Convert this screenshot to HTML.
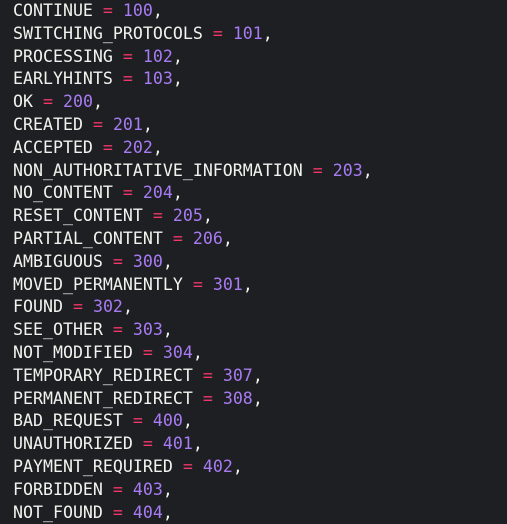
<!DOCTYPE html>
<html><head><meta charset="utf-8"><style>
html,body{margin:0;padding:0;background:#1e1f22;width:507px;height:521px;overflow:hidden}
pre{margin:0;position:absolute;left:13px;top:0px;font-family:"DejaVu Sans Mono","Liberation Mono",monospace;font-size:16.6px;line-height:22.8px;color:#f2f2ee}
.o{color:#f2386a}.n{color:#a77bf3}
</style></head><body><pre>CONTINUE <span class="o">=</span> <span class="n">100</span>,
SWITCHING_PROTOCOLS <span class="o">=</span> <span class="n">101</span>,
PROCESSING <span class="o">=</span> <span class="n">102</span>,
EARLYHINTS <span class="o">=</span> <span class="n">103</span>,
OK <span class="o">=</span> <span class="n">200</span>,
CREATED <span class="o">=</span> <span class="n">201</span>,
ACCEPTED <span class="o">=</span> <span class="n">202</span>,
NON_AUTHORITATIVE_INFORMATION <span class="o">=</span> <span class="n">203</span>,
NO_CONTENT <span class="o">=</span> <span class="n">204</span>,
RESET_CONTENT <span class="o">=</span> <span class="n">205</span>,
PARTIAL_CONTENT <span class="o">=</span> <span class="n">206</span>,
AMBIGUOUS <span class="o">=</span> <span class="n">300</span>,
MOVED_PERMANENTLY <span class="o">=</span> <span class="n">301</span>,
FOUND <span class="o">=</span> <span class="n">302</span>,
SEE_OTHER <span class="o">=</span> <span class="n">303</span>,
NOT_MODIFIED <span class="o">=</span> <span class="n">304</span>,
TEMPORARY_REDIRECT <span class="o">=</span> <span class="n">307</span>,
PERMANENT_REDIRECT <span class="o">=</span> <span class="n">308</span>,
BAD_REQUEST <span class="o">=</span> <span class="n">400</span>,
UNAUTHORIZED <span class="o">=</span> <span class="n">401</span>,
PAYMENT_REQUIRED <span class="o">=</span> <span class="n">402</span>,
FORBIDDEN <span class="o">=</span> <span class="n">403</span>,
NOT_FOUND <span class="o">=</span> <span class="n">404</span>,</pre></body></html>
